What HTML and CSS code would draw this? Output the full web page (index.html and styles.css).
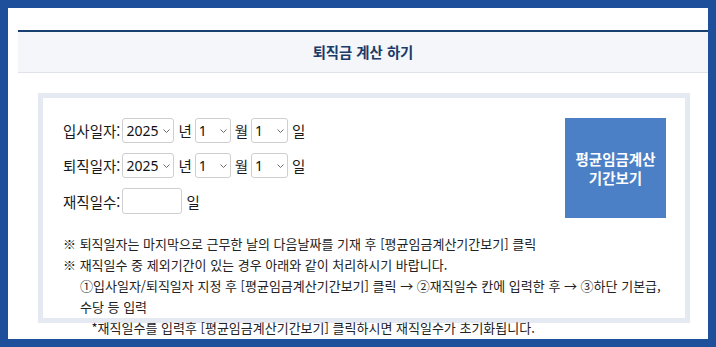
FILE: index.html
```html
<!DOCTYPE html>
<html lang="ko">
<head>
<meta charset="utf-8">
<title>퇴직금 계산 하기</title>
<link rel="stylesheet" href="styles.css">
</head>
<body>
<div class="frame">
  <div class="header"><h1 class="title">퇴직금 계산 하기</h1></div>
  <div class="calc">
    <div class="top">
      <div class="form">
        <div class="row">
          <span class="label">입사일자:</span>
          <span class="sel sel-year"><select><option>2025</option></select><svg class="chev" width="7" height="4" viewBox="0 0 7 4"><path d="M0.5 0.5 L3.5 3.5 L6.5 0.5"/></svg></span>
          <span class="unit">년</span>
          <span class="sel sel-month"><select><option>1</option></select><svg class="chev" width="7" height="4" viewBox="0 0 7 4"><path d="M0.5 0.5 L3.5 3.5 L6.5 0.5"/></svg></span>
          <span class="unit">월</span>
          <span class="sel sel-day"><select><option>1</option></select><svg class="chev" width="7" height="4" viewBox="0 0 7 4"><path d="M0.5 0.5 L3.5 3.5 L6.5 0.5"/></svg></span>
          <span class="unit">일</span>
        </div>
        <div class="row">
          <span class="label">퇴직일자:</span>
          <span class="sel sel-year"><select><option>2025</option></select><svg class="chev" width="7" height="4" viewBox="0 0 7 4"><path d="M0.5 0.5 L3.5 3.5 L6.5 0.5"/></svg></span>
          <span class="unit">년</span>
          <span class="sel sel-month"><select><option>1</option></select><svg class="chev" width="7" height="4" viewBox="0 0 7 4"><path d="M0.5 0.5 L3.5 3.5 L6.5 0.5"/></svg></span>
          <span class="unit">월</span>
          <span class="sel sel-day"><select><option>1</option></select><svg class="chev" width="7" height="4" viewBox="0 0 7 4"><path d="M0.5 0.5 L3.5 3.5 L6.5 0.5"/></svg></span>
          <span class="unit">일</span>
        </div>
        <div class="row">
          <span class="label">재직일수:</span>
          <input class="days" type="text">
          <span class="unit">일</span>
        </div>
      </div>
      <button class="btn" type="button">평균임금계산<br>기간보기</button>
    </div>
    <div class="notes">
      <p>※ 퇴직일자는 마지막으로 근무한 날의 다음날짜를 기재 후 [평균임금계산기간보기] 클릭</p>
      <p>※ 재직일수 중 제외기간이 있는 경우 아래와 같이 처리하시기 바랍니다.</p>
      <p class="step">①입사일자/퇴직일자 지정 후 [평균임금계산기간보기] 클릭 → ②재직일수 칸에 입력한 후 → ③하단 기본급,<br>수당 등 입력</p>
      <p class="hint">*재직일수를 입력후 [평균임금계산기간보기] 클릭하시면 재직일수가 초기화됩니다.</p>
    </div>
  </div>
</div>
</body>
</html>
```
FILE: styles.css
```css
* { box-sizing: border-box; }
html, body { margin: 0; padding: 0; }
body {
  font-family: "Noto Sans CJK KR", "Noto Sans", sans-serif;
  color: #222;
  background: #fff;
}
.frame {
  width: 716px;
  height: 347px;
  border: 8px solid #1e4f9b;
  background: #fff;
  overflow: hidden;
}
.header {
  margin: 22px 0 0 10px;
  height: 43px;
  border-top: 2px solid #173f6f;
  border-bottom: 1px solid #dfe2e8;
  background: #f4f6fa;
  display: flex;
  align-items: center;
  justify-content: center;
}
.title {
  margin: 0 0 2px;
  font-size: 14.4px;
  font-weight: 700;
  color: #1b3a68;
}
.calc {
  margin: 20px 18px 0 30px;
  height: 230px;
  border: 5px solid #e4e9f2;
  padding: 20px 19px 0 20px;
}
.top {
  display: flex;
  justify-content: space-between;
  align-items: flex-start;
}
.form {
  display: flex;
  flex-direction: column;
  gap: 10px;
}
.row {
  display: flex;
  align-items: center;
  height: 25px;
  font-size: 14.5px;
  color: #1a1a1a;
}
.row:last-child { height: 26px; }
.label { margin-right: 2px; }
.unit { margin: 0 3px 0 4px; }
.sel {
  position: relative;
  display: inline-block;
  height: 25px;
}
.sel-year { width: 52px; }
.sel-month { width: 36px; }
.sel-day { width: 37px; }
.sel select {
  -webkit-appearance: none;
  appearance: none;
  width: 100%;
  height: 100%;
  margin: 0;
  border: 1px solid #cfcfcf;
  border-radius: 3px;
  background: #fff;
  padding: 0 0 0 3px;
  font-family: "Noto Sans", "Noto Sans CJK KR", sans-serif;
  font-size: 14px;
  color: #111;
}
.chev {
  position: absolute;
  right: 4px;
  top: 11px;
  fill: none;
  stroke: #6b6b6b;
  stroke-width: 1;
}
.days {
  width: 60px;
  height: 26px;
  margin: 0;
  border: 1px solid #cfcfcf;
  border-radius: 3px;
  background: #fff;
  padding: 0 4px;
}
.btn {
  width: 101px;
  height: 100px;
  border: 0;
  margin: 0;
  padding: 0;
  background: #4b7fc6;
  color: #fff;
  font-family: "Noto Sans CJK KR", "Noto Sans", sans-serif;
  font-size: 14.5px;
  font-weight: 700;
  line-height: 19px;
}
.notes {
  margin-top: 15px;
  font-size: 13px;
  line-height: 21px;
  color: #222;
}
.notes p { margin: 0; }
.step { padding-left: 17px; margin-right: -14px; }
.hint { padding-left: 28.5px; }
```
